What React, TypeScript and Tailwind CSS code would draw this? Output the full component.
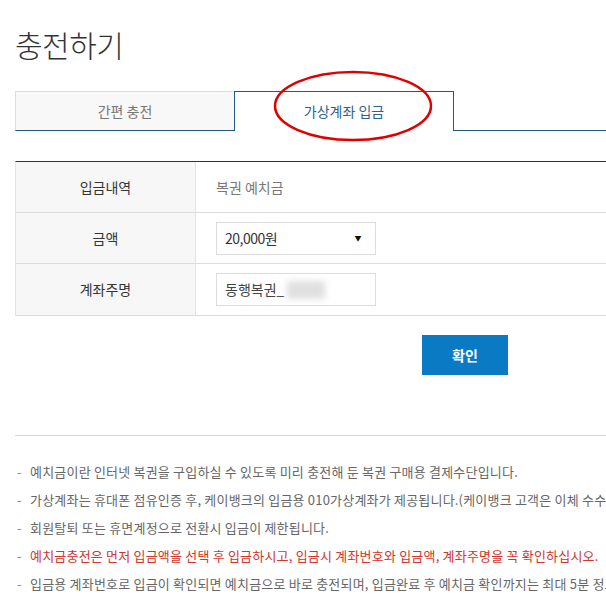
import React from "react";

const notes = [
  { text: "예치금이란 인터넷 복권을 구입하실 수 있도록 미리 충전해 둔 복권 구매용 결제수단입니다.", red: false },
  { text: "가상계좌는 휴대폰 점유인증 후, 케이뱅크의 입금용 010가상계좌가 제공됩니다.(케이뱅크 고객은 이체 수수료 없이 입금 가능합니다.)", red: false },
  { text: "회원탈퇴 또는 휴면계정으로 전환시 입금이 제한됩니다.", red: false },
  { text: "예치금충전은 먼저 입금액을 선택 후 입금하시고, 입금시 계좌번호와 입금액, 계좌주명을 꼭 확인하십시오.", red: true },
  { text: "입금용 계좌번호로 입금이 확인되면 예치금으로 바로 충전되며, 입금완료 후 예치금 확인까지는 최대 5분 정도 소요됩니다.", red: false },
];

function Row({ label, children, last }: { label: string; children: React.ReactNode; last?: boolean }) {
  return (
    <div className={`flex h-[51px] ${last ? "" : "border-b border-[#dcdcdc]"}`}>
      <div className="w-[180px] flex items-center justify-center bg-[#f7f7f7] border-r border-[#e3e3e3] text-[14px] text-[#333]">
        {label}
      </div>
      <div className="flex-1 flex items-center pl-[20px]">{children}</div>
    </div>
  );
}

export default function App() {
  return (
    <div
      className="relative w-[606px] h-[597px] overflow-hidden bg-white"
      style={{ fontFamily: '"Noto Sans CJK KR", "Noto Sans", sans-serif' }}
    >
      <div className="w-[900px] ml-[15px]">
        <h1 className="pt-[22px] text-[30px] leading-[44px] font-light text-[#333] tracking-[-0.5px]">충전하기</h1>

        {/* tabs */}
        <div className="flex mt-[25px] h-[40px]">
          <div className="w-[219px] flex items-center justify-center bg-[#f8f8f8] border-t border-l border-[#dddddd] border-b border-b-[#1f5a80] text-[14px] text-[#777]">
            간편 충전
          </div>
          <div className="w-[220px] flex items-center justify-center bg-white border border-b-0 border-[#1f5a80] text-[14px] text-[#2f5f8f]">
            가상계좌 입금
          </div>
          <div className="flex-1 border-b border-[#1f5a80]" />
        </div>

        {/* table */}
        <div className="mt-[30px] border-t border-[#333] border-b border-b-[#dcdcdc] border-l border-l-[#e3e3e3]">
          <Row label="입금내역">
            <span className="text-[14px] text-[#777]">복권 예치금</span>
          </Row>
          <Row label="금액">
            <div className="w-[160px] h-[33px] border border-[#dcdcdc] flex items-center justify-between px-[8px] text-[14px] text-[#333] tracking-[-0.5px]">
              <span>20,000원</span>
              <span className="text-[7px] text-[#111] mr-[6px]">▼</span>
            </div>
          </Row>
          <Row label="계좌주명" last>
            <div className="w-[160px] h-[33px] border border-[#dcdcdc] flex items-center px-[8px] text-[14px] text-[#444]">
              <span>동행복권_</span>
              <span className="ml-[3px] w-[38px] h-[18px] bg-[#d8d8d8] blur-[3px] opacity-80" />
            </div>
          </Row>
        </div>

        {/* button */}
        <div className="flex justify-center mt-[19px]">
          <button className="w-[86px] h-[40px] bg-[#0b7ac4] text-white text-[14px] font-bold">확인</button>
        </div>

        <div className="mt-[60px] border-t border-[#d5d5d5]" />

        <ul className="mt-[26px] flex flex-col gap-[8px]">
          {notes.map((n, i) => (
            <li
              key={i}
              className={`flex whitespace-nowrap text-[13px] leading-[20px] tracking-[0.2px] ${n.red ? "text-[#d2352c]" : "text-[#666]"}`}
            >
              <span className="w-[15px] pl-[2px] text-[#888]">-</span>
              <span>{n.text}</span>
            </li>
          ))}
        </ul>
      </div>

      {/* red annotation circle */}
      <svg className="absolute left-0 top-0 pointer-events-none" width="606" height="597">
        <ellipse cx="353" cy="106" rx="78" ry="34" fill="none" stroke="#e00000" strokeWidth="2.5" />
      </svg>
    </div>
  );
}
